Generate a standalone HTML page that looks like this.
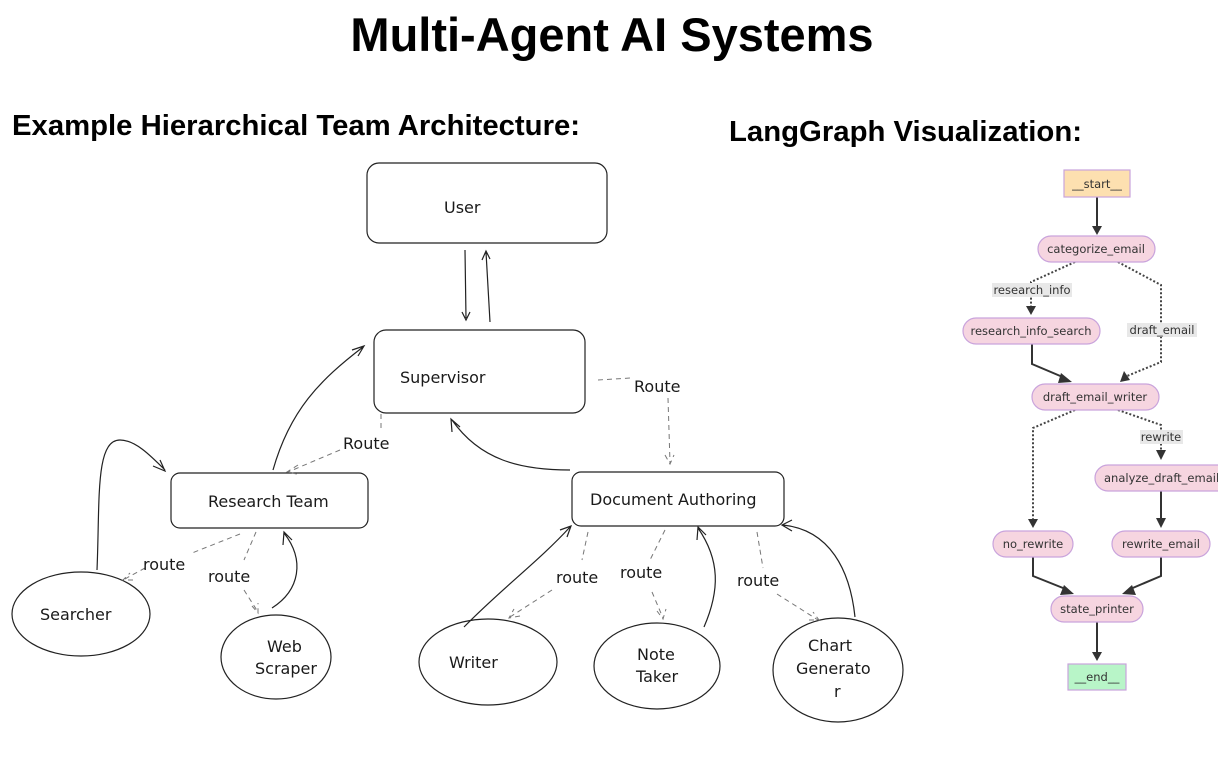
<!DOCTYPE html>
<html><head><meta charset="utf-8"><style>
html,body{margin:0;padding:0;background:#fff;width:1218px;height:762px;overflow:hidden}
svg{display:block}
.h{font-family:"Liberation Sans",sans-serif;font-weight:bold;fill:#000}
.t{font-family:"DejaVu Sans","Liberation Sans",sans-serif;font-size:16px;fill:#1a1a1a}
.g{font-family:"DejaVu Sans","Liberation Sans",sans-serif;font-size:11.5px;fill:#333}
.b{fill:#fff;stroke:#222;stroke-width:1.2}
.p{fill:#f6d5e0;stroke:#c9a3dc;stroke-width:1.2}
.d{fill:none;stroke:#777;stroke-width:1;stroke-dasharray:5 4}
.s{fill:none;stroke:#222;stroke-width:1.2}
.e{fill:none;stroke:#333;stroke-width:2}
.ed{fill:none;stroke:#444;stroke-width:2;stroke-dasharray:2 2}
</style></head><body>
<svg width="1218" height="762" viewBox="0 0 1218 762">
<text x="612" y="51" text-anchor="middle" class="h" font-size="47">Multi-Agent AI Systems</text>
<text x="12" y="135" class="h" font-size="29" textLength="568" lengthAdjust="spacingAndGlyphs">Example Hierarchical Team Architecture:</text>
<text x="729" y="141" class="h" font-size="29" textLength="353" lengthAdjust="spacingAndGlyphs">LangGraph Visualization:</text>

<!-- left diagram -->
<rect class="b" x="367" y="163" width="240" height="80" rx="12"/>
<text class="t" x="444" y="213">User</text>
<rect class="b" x="374" y="330" width="211" height="83" rx="12"/>
<text class="t" x="400" y="383">Supervisor</text>
<rect class="b" x="171" y="473" width="197" height="55" rx="9"/>
<text class="t" x="208" y="507">Research Team</text>
<rect class="b" x="572" y="472" width="212" height="54" rx="9"/>
<text class="t" x="590" y="505">Document Authoring</text>
<ellipse class="b" cx="81" cy="614" rx="69" ry="42"/>
<text class="t" x="40" y="620">Searcher</text>
<ellipse class="b" cx="276" cy="657" rx="55" ry="42"/>
<text class="t" x="267" y="652">Web</text><text class="t" x="255" y="674">Scraper</text>
<ellipse class="b" cx="488" cy="662" rx="69" ry="43"/>
<text class="t" x="449" y="668">Writer</text>
<ellipse class="b" cx="657" cy="666" rx="63" ry="43"/>
<text class="t" x="637" y="660">Note</text><text class="t" x="636" y="682">Taker</text>
<ellipse class="b" cx="838" cy="670" rx="65" ry="52"/>
<text class="t" x="808" y="651">Chart</text><text class="t" x="796" y="674">Generato</text><text class="t" x="834" y="697">r</text>

<path class="s" d="M465 250 L466 318 M462 312 L466 320 L470 312"/>
<path class="s" d="M490 322 L486 252 M482 260 L486 251 L490 259"/>
<path class="s" d="M273 470 C290 410 320 380 363 347 M352 350 L364 346 L358 356"/>
<path class="d" d="M381 414 L381 428"/>
<path class="d" d="M340 450 L288 472 M298 465 L287 472 L297 474"/>
<text class="t" x="343" y="449">Route</text>
<path class="d" d="M598 380 L630 378"/>
<text class="t" x="634" y="392">Route</text>
<path class="d" d="M668 398 L670 463 M665 455 L670 464 L674 455"/>
<path class="s" d="M570 470 C520 470 480 460 452 420 M452 432 L451 419 L460 427"/>
<path class="s" d="M97 570 C100 500 95 440 120 440 C135 440 150 455 165 470 M153 466 L165 471 L160 460"/>
<path class="d" d="M240 534 L192 553 M145 568 L123 580 M133 580 L123 580 L130 573"/>
<text class="t" x="143" y="570">route</text>
<path class="d" d="M256 532 L244 560 M244 590 L258 612 M252 606 L258 613 L258 603"/>
<text class="t" x="208" y="582">route</text>
<path class="s" d="M272 608 C300 590 305 560 284 533 M283 545 L284 532 L292 540"/>
<path class="s" d="M464 627 C500 590 540 560 570 527 M560 530 L571 526 L567 537"/>
<path class="d" d="M588 532 L582 560 M552 590 L510 617 M520 616 L509 618 L514 609"/>
<text class="t" x="556" y="583">route</text>
<path class="d" d="M665 530 L650 560 M652 592 L663 618 M657 611 L663 619 L666 609"/>
<text class="t" x="620" y="578">route</text>
<path class="s" d="M704 627 C720 590 720 560 698 528 M697 540 L698 527 L706 535"/>
<path class="d" d="M757 532 L763 568 M777 594 L818 620 M809 620 L819 620 L813 612"/>
<text class="t" x="737" y="586">route</text>
<path class="s" d="M855 617 C850 570 830 530 783 525 M792 520 L782 525 L792 531"/>

<!-- langgraph -->
<path class="e" d="M1097 197 L1097 228"/><path d="M1092 226 L1102 226 L1097 235Z" fill="#333"/>
<path class="ed" d="M1075 262 L1031 282 L1031 307"/><path d="M1026 306 L1036 306 L1031 315Z" fill="#333"/>
<rect x="992" y="283" width="80" height="14" fill="#e8e8e8"/><text class="g" x="1032" y="294" text-anchor="middle">research_info</text>
<path class="ed" d="M1118 262 L1161 285 L1161 362 L1127 376"/><path d="M1124 371 L1130 380 L1120 382Z" fill="#333"/>
<rect x="1127" y="323" width="70" height="14" fill="#e8e8e8"/><text class="g" x="1162" y="334" text-anchor="middle">draft_email</text>
<path class="e" d="M1032 344 L1032 364 L1065 378"/><path d="M1061 373 L1072 382 L1058 383Z" fill="#333"/>
<path class="ed" d="M1075 410 L1033 428 L1033 520"/><path d="M1028 519 L1038 519 L1033 528Z" fill="#333"/>
<path class="ed" d="M1118 410 L1161 425 L1161 452"/><path d="M1156 450 L1166 450 L1161 460Z" fill="#333"/>
<rect x="1140" y="430" width="43" height="14" fill="#e8e8e8"/><text class="g" x="1161" y="441" text-anchor="middle">rewrite</text>
<path class="e" d="M1161 491 L1161 520"/><path d="M1156 518 L1166 518 L1161 528Z" fill="#333"/>
<path class="e" d="M1033 557 L1033 576 L1068 590"/><path d="M1064 585 L1074 594 L1060 595Z" fill="#333"/>
<path class="e" d="M1161 557 L1161 576 L1128 590"/><path d="M1132 585 L1122 594 L1136 595Z" fill="#333"/>
<path class="e" d="M1097 622 L1097 654"/><path d="M1092 652 L1102 652 L1097 661Z" fill="#333"/>

<rect x="1064" y="170" width="66" height="27" fill="#fde0b0" stroke="#c9a3dc" stroke-width="1.2"/>
<text class="g" x="1097" y="188" text-anchor="middle">__start__</text>
<rect class="p" x="1038" y="236" width="117" height="26" rx="13"/><text class="g" x="1096" y="253" text-anchor="middle">categorize_email</text>
<rect class="p" x="963" y="318" width="137" height="26" rx="13"/><text class="g" x="1031" y="335" text-anchor="middle">research_info_search</text>
<rect class="p" x="1032" y="384" width="127" height="26" rx="13"/><text class="g" x="1095" y="401" text-anchor="middle">draft_email_writer</text>
<rect class="p" x="1095" y="465" width="135" height="26" rx="13"/><text class="g" x="1104" y="482">analyze_draft_email</text>
<rect class="p" x="993" y="531" width="80" height="26" rx="13"/><text class="g" x="1033" y="548" text-anchor="middle">no_rewrite</text>
<rect class="p" x="1112" y="531" width="98" height="26" rx="13"/><text class="g" x="1161" y="548" text-anchor="middle">rewrite_email</text>
<rect class="p" x="1051" y="596" width="92" height="26" rx="13"/><text class="g" x="1097" y="613" text-anchor="middle">state_printer</text>
<rect x="1068" y="664" width="58" height="26" fill="#b8f5c8" stroke="#c9a3dc" stroke-width="1.2"/>
<text class="g" x="1097" y="681" text-anchor="middle">__end__</text>
</svg>
</body></html>
